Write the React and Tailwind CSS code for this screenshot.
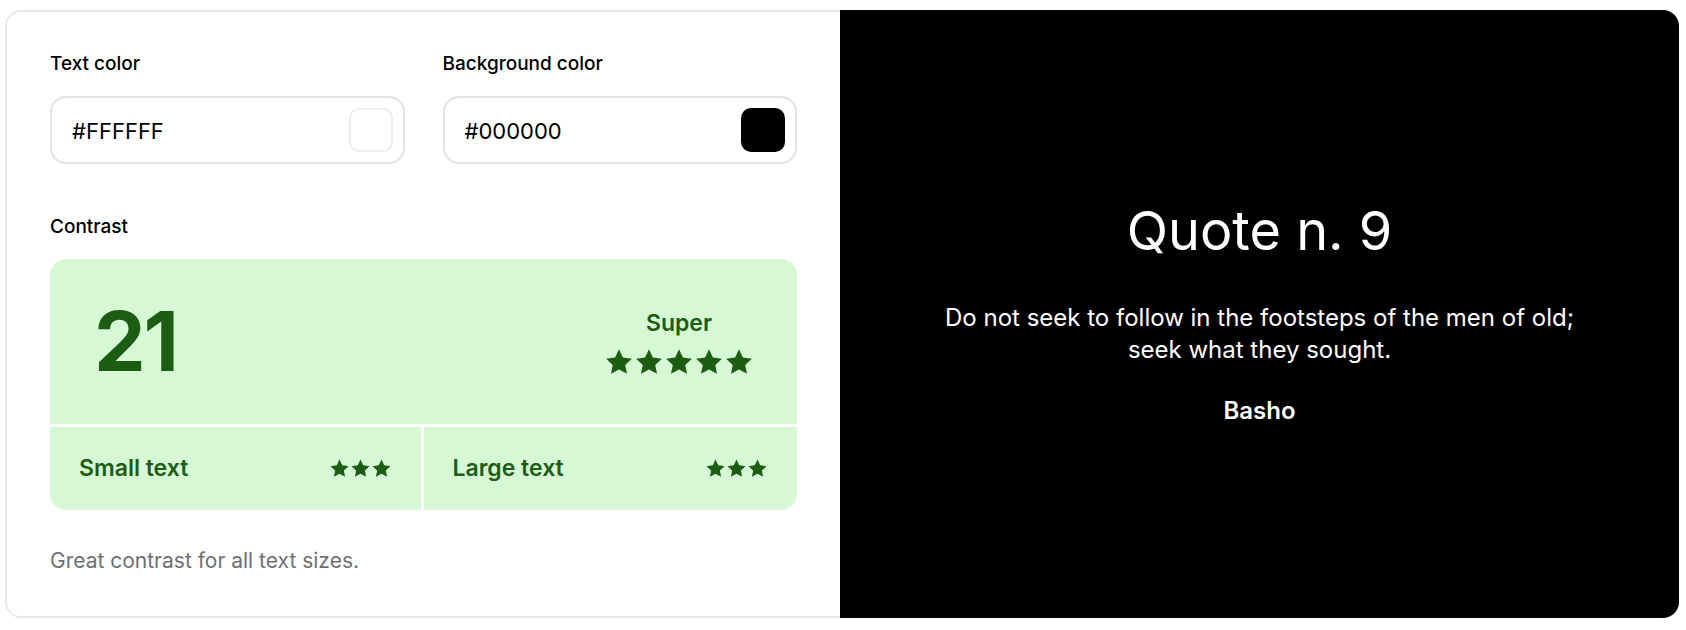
import React from "react";

const Star = ({ size = 24 }) => (
  <svg width={size} height={size} viewBox="0 0 24 24" fill="currentColor">
    <path d="M12 1.8l3.1 6.6 7.2.9-5.3 5 1.4 7.1L12 17.9l-6.4 3.5L7 14.3l-5.3-5 7.2-.9z" />
  </svg>
);

const Stars = ({ count, size }) => (
  <div className="flex items-center">
    {Array.from({ length: count }).map((_, i) => (
      <Star key={i} size={size} />
    ))}
  </div>
);

const ColorField = ({ label, value, swatch }) => (
  <div className="flex flex-col gap-5">
    <label className="text-[19px] leading-6 font-medium text-black">{label}</label>
    <div className="flex items-center justify-between h-[68px] rounded-2xl border-2 border-[#e2e2e2] pl-[20px] pr-[10px]">
      <span className="text-[22px] text-black pt-[2px]">{value}</span>
      <div className={`w-[44px] h-[44px] rounded-[10px] ${swatch}`} />
    </div>
  </div>
);

export default function App() {
  return (
    <div
      className="pl-[5px] pt-[10px] bg-white"
      style={{ fontFamily: "Inter, 'Noto Sans', sans-serif" }}
    >
      <div className="flex w-[1674px] h-[608px]">
        {/* Settings */}
        <div className="w-[835px] border-2 border-r-0 border-[#e8e8e8] rounded-l-2xl px-[43px] pt-[40px]">
          <div className="grid grid-cols-2 gap-[38px]">
            <ColorField label="Text color" value="#FFFFFF" swatch="bg-white border-2 border-[#ececec]" />
            <ColorField label="Background color" value="#000000" swatch="bg-black" />
          </div>

          <div className="mt-[51px] flex flex-col gap-5">
            <label className="text-[19px] leading-6 font-medium text-black">Contrast</label>
            <div className="rounded-2xl overflow-hidden bg-[#d6f8d4] text-[#1d5c13]">
              <div className="h-[168px] flex items-center justify-between pl-[44px] pr-[43px] border-b-[3px] border-white">
                <span className="text-[82px] leading-none font-bold tracking-tight">21</span>
                <div className="flex flex-col items-center gap-[8px]">
                  <span className="text-[23px] leading-8 font-semibold">Super</span>
                  <Stars count={5} size={30} />
                </div>
              </div>
              <div className="grid grid-cols-2 h-[83px]">
                <div className="flex items-center justify-between px-[29px] border-r-[3px] border-white">
                  <span className="text-[23px] font-semibold">Small text</span>
                  <Stars count={3} size={21} />
                </div>
                <div className="flex items-center justify-between px-[29px]">
                  <span className="text-[23px] font-semibold">Large text</span>
                  <Stars count={3} size={21} />
                </div>
              </div>
            </div>
          </div>

          <p className="mt-[37px] text-[21px] leading-7 text-[#6f6f73]">
            Great contrast for all text sizes.
          </p>
        </div>

        {/* Preview */}
        <div className="flex-1 bg-black rounded-r-2xl flex flex-col items-center justify-center text-white text-center pt-[3px]">
          <h1 className="text-[54px] leading-none font-normal">Quote n. 9</h1>
          <p className="mt-[44px] text-[24px] leading-8">
            Do not seek to follow in the footsteps of the men of old;
            <br />
            seek what they sought.
          </p>
          <p className="mt-[29px] text-[24px] leading-8 font-semibold">Basho</p>
        </div>
      </div>
    </div>
  );
}
